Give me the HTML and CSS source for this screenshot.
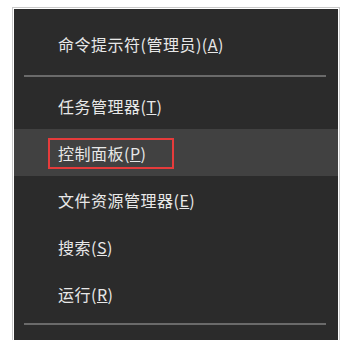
FILE: index.html
```html
<!DOCTYPE html>
<html lang="zh-CN">
<head>
  <meta charset="UTF-8">
  <title>Win+X 菜单</title>
  <link rel="stylesheet" href="styles.css">
</head>
<body>
  <div class="frame">
    <ul class="menu">
      <li class="item item-first">命令提示符(管理员)(<u>A</u>)</li>
      <li class="sep"></li>
      <li class="item">任务管理器(<u>T</u>)</li>
      <li class="item active">控制面板(<u>P</u>)<span class="mark"></span></li>
      <li class="item">文件资源管理器(<u>E</u>)</li>
      <li class="item">搜索(<u>S</u>)</li>
      <li class="item">运行(<u>R</u>)</li>
      <li class="sep sep-last"></li>
    </ul>
  </div>
</body>
</html>
```

FILE: styles.css
```css
:root {
  --menu-bg:   #2b2b2b;
  --menu-hover: #414141;
  --menu-text: #e8e8e8;
  --sep:       #6a6a6a;
  --frame:     #c9c9c9;
  --mark:      #e53b3b;
}
*, *::before, *::after { box-sizing: border-box; }
html, body { height: 100%; }
body {
  margin: 0;
  background: #fff;
  overflow: hidden;
  font-family: "Noto Sans CJK SC", "Noto Sans", sans-serif;
}

/* 外枠 */
.frame {
  margin: 7px 0 0 12px;
  width: 328px;
  height: 340px;
  border: 1px solid var(--frame);
  border-bottom: none;
  padding: 1px 1px 0;
  background: #fff;
}

/* メニュー本体 */
.menu {
  list-style: none;
  margin: 0;
  padding: 11px 0 0;
  height: 100%;
  background: var(--menu-bg);
}
.item {
  position: relative;
  height: 47px;
  display: flex;
  align-items: center;
  padding-left: 44px;
  color: var(--menu-text);
  font-size: 16px;
  letter-spacing: 0.5px;
}
.item u { text-underline-offset: 1px; }
.item.active { background: var(--menu-hover); }

.sep {
  height: 2px;
  margin: 8px 12px 5px 10px;
  background: var(--sep);
}
.sep-last { margin-top: 6px; }

/* 赤枠の注釈 */
.mark {
  position: absolute;
  left: 34px;
  top: 9px;
  width: 126px;
  height: 31px;
  border: 2px solid var(--mark);
}
```
